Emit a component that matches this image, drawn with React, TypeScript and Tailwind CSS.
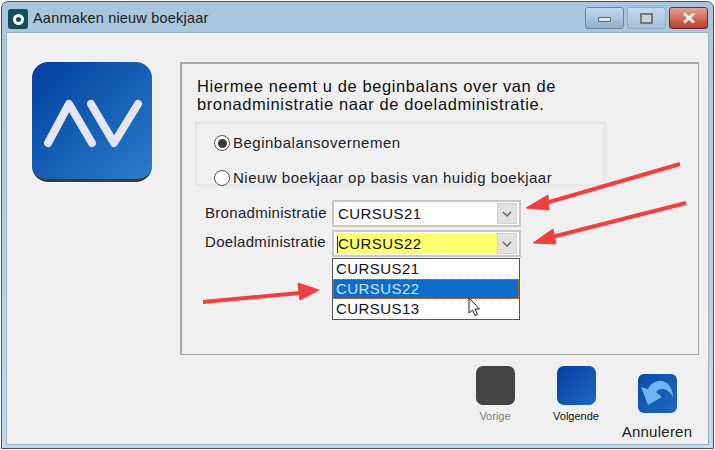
import React from "react";

const font = "font-['Liberation_Sans',sans-serif]";

function Combo({ value, yellow }: { value: string; yellow?: boolean }) {
  return (
    <div className="w-[189px] h-[27px] border-2 border-[#c8c8c8] bg-white flex items-center pl-[3px] pr-[2px]">
      <div className={`flex-1 h-[21px] flex items-center pt-[2px] text-[15px] tracking-[0.45px] text-[#101018] ${yellow ? "bg-[#ffff70]" : "bg-white"}`}>
        {yellow ? <span className="w-px h-[17px] bg-[#303060]" /> : <span className="w-px" />}
        {value}
      </div>
      <div className="w-[20px] h-[21px] bg-[#e1e1e1] border border-[#d0d0d0] flex items-center justify-center">
        <svg width="10" height="6" viewBox="0 0 10 6"><path d="M1 1l4 4 4-4" fill="none" stroke="#606060" strokeWidth="1.3" /></svg>
      </div>
    </div>
  );
}

function Radio({ checked, label }: { checked?: boolean; label: string }) {
  return (
    <div className="flex items-center gap-[3px] h-[20px] text-[15px] tracking-[0.5px] text-[#202028]">
      <span className="w-[16px] h-[16px] rounded-full border border-[#555] bg-white flex items-center justify-center shrink-0">
        {checked && <span className="w-[9px] h-[9px] rounded-full bg-[#3a3a3a]" />}
      </span>
      {label}
    </div>
  );
}

function NavButton({ label, dim, bg }: { label: string; dim?: boolean; bg: string }) {
  return (
    <div className="flex flex-col items-center w-[60px]">
      <div className={`w-[39px] h-[39px] rounded-[7px] ${bg}`} />
      <span className={`mt-[5px] text-[11px] leading-[12px] ${dim ? "text-[#808080]" : "text-[#101010]"}`}>{label}</span>
    </div>
  );
}

export default function App() {
  return (
    <div className={`${font} relative w-[715px] h-[450px] overflow-hidden bg-white p-px`}>
      <div className="w-full h-full rounded-t-[7px] border border-[#3a5a66] bg-gradient-to-b from-[#a9c5de] to-[#c3d9ec] flex flex-col">
        <div className="h-[30px] shrink-0 flex items-center pl-[6px] pr-[3px] pt-[4px]">
          <div className="w-[20px] h-[20px] rounded-[3px] bg-[#12505a] flex items-center justify-center">
            <span className="w-[11px] h-[11px] rounded-full border-[3px] border-white bg-[#12505a]" />
          </div>
          <span className="ml-[5px] text-[14.5px] tracking-[0.2px] text-[#1a1a1a]">Aanmaken nieuw boekjaar</span>
          <div className="ml-auto flex items-start self-start mt-[1px] gap-[3px] mr-[2px]">
            <div className="w-[39px] h-[22px] rounded-[3px] border border-[#6f8299] bg-gradient-to-b from-[#c6d9ee] to-[#8fb0cf] flex items-center justify-center">
              <span className="w-[13px] h-[5px] bg-[#e6e6e6] border border-[#666] rounded-[1px] mt-[2px]" />
            </div>
            <div className="w-[39px] h-[22px] rounded-[3px] border border-[#92aac2] bg-gradient-to-b from-[#c6d9ee] to-[#a4c0da] flex items-center justify-center">
              <span className="w-[13px] h-[11px] bg-[#c9d0d8] border-[2px] border-[#777]" />
            </div>
            <div className="w-[39px] h-[22px] rounded-[3px] border border-[#6b2a35] bg-gradient-to-b from-[#e9a090] to-[#b83a22] flex items-center justify-center">
              <svg width="14" height="12" viewBox="0 0 14 12"><path d="M2 1.500l10 9M12 1.500l-10 9" stroke="#eee" strokeWidth="3" /></svg>
            </div>
          </div>
        </div>
        <div className="flex-1 mx-[4px] mb-[3px] bg-[#f0f0f0] border border-[#9fb2c2] flex flex-col">
          <div className="flex flex-1 pt-[29px]">
            <div className="w-[173px] pl-[25px] shrink-0">
              <div className="w-[120px] h-[120px] rounded-[16px] bg-gradient-to-br from-[#033f9f] to-[#2a7ccb] border-b-[3px] border-[#3a3a3a] shadow-[0_0_3px_#ffffff]">
                <svg width="120" height="117" viewBox="0 0 120 117">
                  <path d="M16 81L37 42 60 81M59 42L82 81 106 42" fill="none" stroke="#e6e6f2" strokeWidth="8" strokeLinecap="round" strokeLinejoin="round" />
                </svg>
              </div>
            </div>
            <div className="w-[519px] h-[293px] border border-[#a8a8a8] border-l-2 border-t-2 pt-[13px] pl-[15px]">
              <p className="text-[16.5px] leading-[18px] tracking-[0.6px] text-[#111]">
                Hiermee neemt u de beginbalans over van de<br />bronadministratie naar de doeladministratie.
              </p>
              <div className="mt-[9px] -ml-[2px] w-[411px] h-[64px] border-2 border-[#e6e6e6] pl-[17px] pt-[9px] flex flex-col gap-[15px]">
                <Radio checked label="Beginbalansovernemen" />
                <Radio label="Nieuw boekjaar op basis van huidig boekjaar" />
              </div>
              <div className="mt-[14px] flex flex-col gap-[3px] relative">
                <div className="flex items-start">
                  <span className="w-[135px] pl-[8px] pt-[3px] text-[15px] leading-[20px] tracking-[0.3px] text-[#202028]">Bronadministratie</span>
                  <Combo value="CURSUS21" />
                </div>
                <div className="flex items-start">
                  <span className="w-[135px] pl-[8px] pt-[2px] text-[15px] leading-[20px] tracking-[0.3px] text-[#202028]">Doeladministratie</span>
                  <Combo value="CURSUS22" yellow />
                </div>
                <div className="absolute left-[135px] top-[58px] w-[188px] h-[62px] border border-[#555] bg-white text-[15px] tracking-[0.45px] leading-[20px] text-[#101018]">
                  <div className="h-[20px] pl-[3px]">CURSUS21</div>
                  <div className="h-[20px] pl-[3px] bg-[#0b6cc9] text-[#cfe4fa] outline-1 outline-dotted outline-[#c08040] -outline-offset-1">CURSUS22</div>
                  <div className="h-[20px] pl-[3px]">CURSUS13</div>
                </div>
              </div>
            </div>
          </div>
          <div className="h-[88px] shrink-0 flex justify-end pr-[15px]">
            <div className="flex items-start">
              <div className="mt-[10px] mr-[21px]"><NavButton label="Vorige" dim bg="bg-[#444444]" /></div>
              <div className="mt-[10px] mr-[15px]"><NavButton label="Volgende" bg="bg-gradient-to-br from-[#033f9f] to-[#1f68c0]" /></div>
              <div className="flex flex-col items-center w-[72px] mt-[18px]">
                <div className="w-[39px] h-[39px] rounded-[6px] bg-gradient-to-br from-[#0d4aa5] to-[#1f68c0]">
                  <svg width="39" height="39" viewBox="0 0 39 39">
                    <path d="M3 13L10 31 24 23 18 18C22 13 30 14 35 23 35 12 27 5 20 7 15 8 12 11 10 15z" fill="#6db6f5" />
                  </svg>
                </div>
                <span className="mt-[11px] text-[15px] leading-[16px] tracking-[0.25px] text-[#222]">Annuleren</span>
              </div>
            </div>
          </div>
        </div>
      </div>
      <svg className="absolute left-0 top-0 pointer-events-none" width="715" height="450" viewBox="0 0 715 450">
        <g fill="#ee4040" stroke="#ee4040" strokeLinejoin="round">
          <path d="M680 164L546 203" strokeWidth="4" />
          <path d="M526 208L548 195 549 210z" />
          <path d="M686 203L552 237" strokeWidth="4" />
          <path d="M533 243L553 229 556 244z" />
          <path d="M203 302L300 293" strokeWidth="4" />
          <path d="M319 290L298 283 300 300z" />
        </g>
        <path d="M469 298v15l3.500-3 2.500 5.500 2.500-1-2.500-5.500h4.500z" fill="#fff" stroke="#222" strokeWidth="1" />
      </svg>
    </div>
  );
}
